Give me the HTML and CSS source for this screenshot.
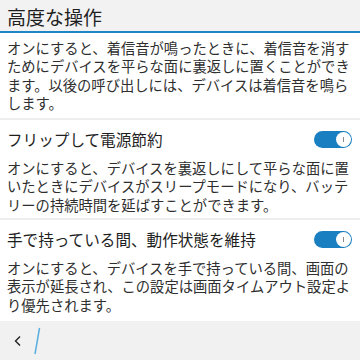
FILE: index.html
```html
<!DOCTYPE html>
<html lang="ja">
<head>
<meta charset="utf-8">
<link rel="stylesheet" href="styles.css">
</head>
<body>
<div class="screen">
  <header class="title-bar">高度な操作</header>
  <main class="content">
    <section class="block first">
      <p class="desc">オンにすると、着信音が鳴ったときに、着信音を消すためにデバイスを平らな面に裏返しに置くことができます。以後の呼び出しには、デバイスは着信音を鳴らします。</p>
    </section>
    <section class="block">
      <div class="row">
        <span class="label">フリップして電源節約</span>
        <span class="toggle"><span class="knob"><span class="tick"></span></span></span>
      </div>
      <p class="desc">オンにすると、デバイスを裏返しにして平らな面に置いたときにデバイスがスリープモードになり、バッテリーの持続時間を延ばすことができます。</p>
    </section>
    <section class="block">
      <div class="row">
        <span class="label">手で持っている間、動作状態を維持</span>
        <span class="toggle"><span class="knob"><span class="tick"></span></span></span>
      </div>
      <p class="desc">オンにすると、デバイスを手で持っている間、画面の表示が延長され、この設定は画面タイムアウト設定より優先されます。</p>
    </section>
  </main>
  <footer class="action-bar">
    <span class="back">
      <svg width="12" height="16" viewBox="0 0 12 16"><path d="M8 3.5 L3.5 8 L8 12.5" fill="none" stroke="#222" stroke-width="1.4"/></svg>
    </span>
    <span class="slash">
      <svg width="10" height="32" viewBox="0 0 10 32"><path d="M7.5 3 L3 29" fill="none" stroke="#5aaee0" stroke-width="1.5"/></svg>
    </span>
  </footer>
</div>
</body>
</html>
```
FILE: styles.css
```css
html, body {
  margin: 0;
  padding: 0;
  background: #ffffff;
}
.screen {
  width: 360px;
  height: 360px;
  display: flex;
  flex-direction: column;
  overflow: hidden;
  font-family: "Noto Sans CJK JP", "Noto Sans", sans-serif;
  color: #2a2a2a;
}
.title-bar {
  flex: none;
  height: 33px;
  box-sizing: border-box;
  background: #f2f2f2;
  border-bottom: 2px solid #1f86c6;
  padding: 2px 0 0 7px;
  font-size: 19px;
  line-height: 29px;
  color: #1f1f1f;
}
.content {
  flex: 1;
  display: flex;
  flex-direction: column;
}
.block {
  padding: 0 7px 4px 7px;
  border-bottom: 2px solid #eeeeee;
}
.block.first {
  padding-top: 6px;
  padding-bottom: 6px;
}
.block:last-child {
  border-bottom: none;
}
.desc {
  margin: 0;
  font-size: 14.3px;
  line-height: 18.3px;
  color: #2e2e2e;
}
.row {
  display: flex;
  align-items: center;
  justify-content: space-between;
  padding-top: 9px;
  padding-bottom: 10px;
}
.label {
  font-size: 15.6px;
  line-height: 20px;
  color: #1e1e1e;
}
.toggle {
  width: 38px;
  height: 17px;
  border-radius: 9px;
  background: #1a7fc1;
  display: flex;
  align-items: center;
  justify-content: flex-end;
  padding-right: 1px;
  box-sizing: border-box;
  margin-right: 1px;
  margin-top: 1px;
}
.knob {
  width: 15px;
  height: 15px;
  border-radius: 50%;
  background: #ffffff;
  display: flex;
  align-items: center;
  justify-content: center;
}
.tick {
  width: 1px;
  height: 5px;
  background: #8a8a8a;
}
.action-bar {
  flex: none;
  height: 39px;
  background: #f1f1f1;
  display: flex;
  align-items: center;
  padding-left: 12px;
  gap: 8px;
}
.back {
  display: flex;
  width: 12px;
  height: 16px;
}
.slash {
  display: flex;
  width: 10px;
  height: 32px;
}
```
